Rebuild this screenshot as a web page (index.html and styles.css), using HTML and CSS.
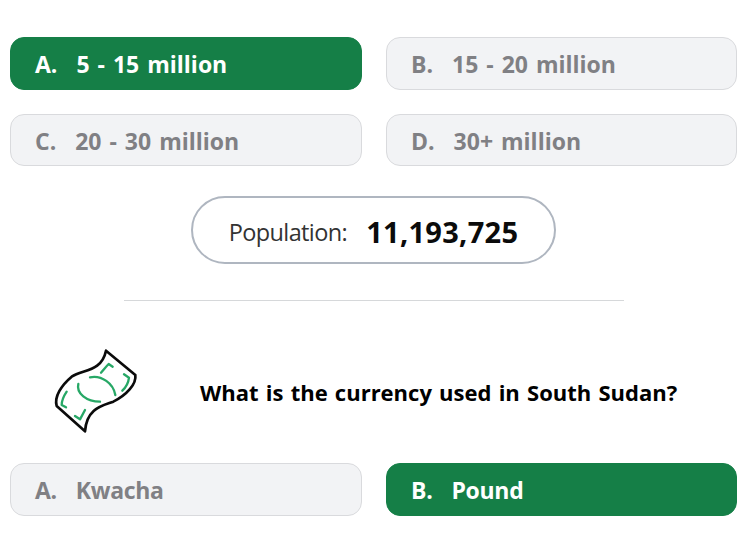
FILE: index.html
```html
<!DOCTYPE html>
<html lang="en">
<head>
<meta charset="utf-8">
<title>Quiz</title>
<link rel="stylesheet" href="styles.css">
</head>
<body>
<main class="page">
  <section class="options">
    <div class="option correct numeric"><span class="letter">A.</span><span>5 - 15 million</span></div>
    <div class="option numeric"><span class="letter">B.</span><span>15 - 20 million</span></div>
    <div class="option numeric"><span class="letter">C.</span><span>20 - 30 million</span></div>
    <div class="option numeric"><span class="letter">D.</span><span>30+ million</span></div>
  </section>
  <div class="pill-row">
    <div class="pill"><span class="pill-label">Population:</span><span class="pill-value">11,193,725</span></div>
  </div>
  <hr class="divider">
  <section class="question">
    <svg class="icon" viewBox="0 0 390 360" width="130" height="120" aria-hidden="true">
      <path class="outline" d="M228 62 L316 135 C320 162 290 195 250 215 C215 228 170 235 165 304 L80 228 C72 200 95 165 125 140 C160 118 215 125 228 62 Z"/>
      <g class="accent">
        <path d="M213 128 C222 118 228 110 236 102 L248 110"/>
        <path d="M282 133 L297 143 C295 160 288 172 277 182"/>
        <path d="M180 142 C215 135 250 160 256 195"/>
        <path d="M145 162 C138 190 170 215 210 215"/>
        <path d="M110 185 C100 200 95 215 95 225 L108 232"/>
        <path d="M135 258 L150 268 L165 240"/>
      </g>
    </svg>
    <h2 class="question-text">What is the currency used in South Sudan?</h2>
  </section>
  <section class="options">
    <div class="option"><span class="letter">A.</span><span>Kwacha</span></div>
    <div class="option correct"><span class="letter">B.</span><span>Pound</span></div>
  </section>
</main>
</body>
</html>
```

FILE: styles.css
```css
* { box-sizing: border-box; }
html, body { margin: 0; background: #fff; }
body { font-family: "Open Sans", "Noto Sans", sans-serif; color: #000; }
.page { width: 750px; height: 536px; padding: 37px 13px 0 10px; overflow: hidden; }
.options { display: grid; grid-template-columns: 352px 351px; column-gap: 24px; row-gap: 24px; }
.option {
  height: 52.5px;
  display: flex;
  align-items: center;
  gap: 19px;
  padding: 2px 24px 0;
  border: 1px solid #d9dadd;
  border-radius: 14px;
  background: #f2f3f5;
  color: #808084;
  font-size: 23px;
  font-weight: 700;
  letter-spacing: -0.3px;
}
.option.numeric { letter-spacing: 0; word-spacing: 2px; }
.option.correct { background: #157f47; border-color: #157f47; color: #fff; }
.pill-row { display: flex; justify-content: center; margin-top: 30px; padding-right: 1px; }
.pill {
  width: 365px;
  height: 68px;
  display: flex;
  align-items: center;
  justify-content: center;
  gap: 19px;
  padding: 2px 0 0 1px;
  border: 2px solid #afb6c0;
  border-radius: 34px;
  background: #fff;
}
.pill-label { font-size: 23.5px; font-weight: 400; color: #333; letter-spacing: -0.6px; padding-top: 1px; }
.pill-value { font-size: 29px; font-weight: 700; color: #0b0b0b; letter-spacing: 0.3px; }
.divider { width: 500px; height: 1px; border: 0; background: #d6d8da; margin: 36px 0 0 114px; }
.question { display: flex; align-items: center; gap: 40px; margin: 29px 0 13px 20px; height: 120px; }
.icon { flex: none; }
.outline { fill: #fff; stroke: #0b0b0b; stroke-width: 8; stroke-linejoin: round; }
.accent path { fill: none; stroke: #27a866; stroke-width: 7; stroke-linecap: round; stroke-linejoin: round; }
.question-text { margin: 4px 0 0; font-size: 22px; font-weight: 700; word-spacing: 1.5px; white-space: nowrap; }
```
